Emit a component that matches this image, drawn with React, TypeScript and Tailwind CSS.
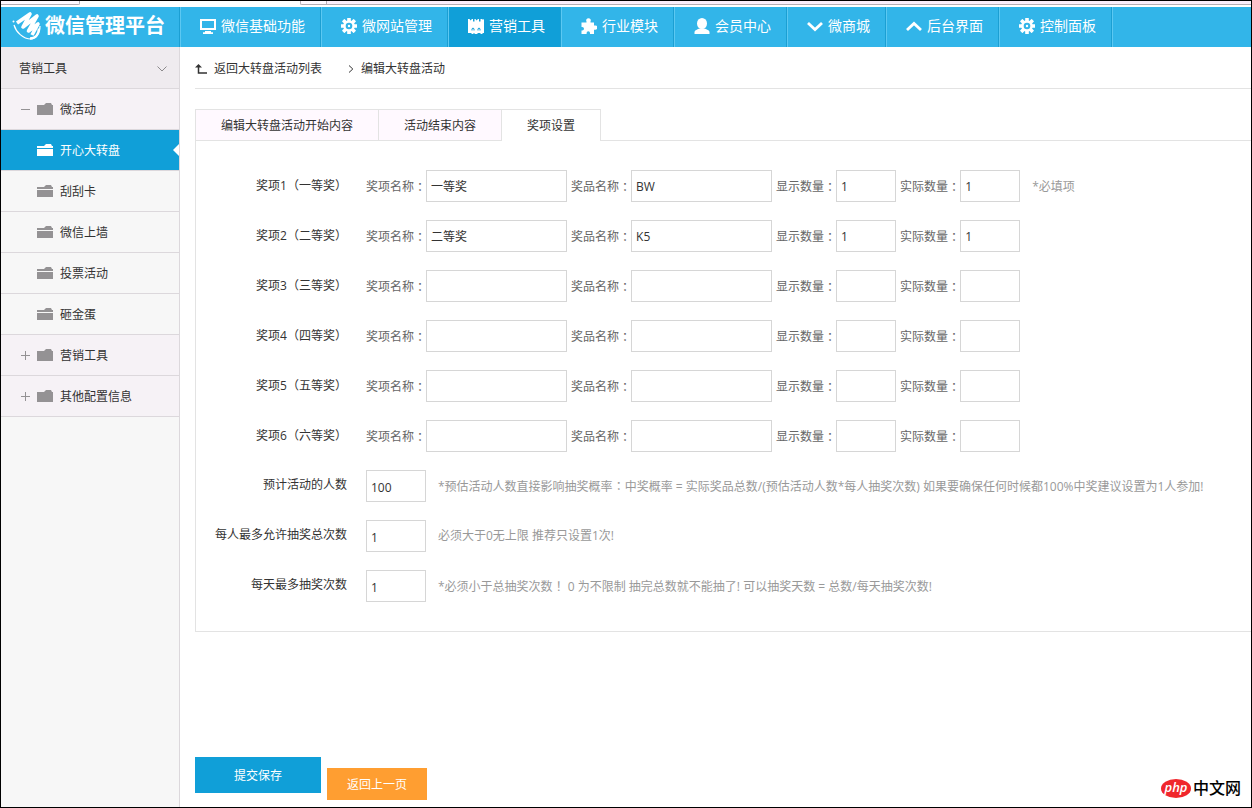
import { ReactNode } from 'react';

interface NavItem {
  label: string;
  icon: ReactNode;
  active?: boolean;
}

interface MenuItem {
  label: string;
  type: 'group' | 'item';
  open?: boolean;
  active?: boolean;
}

interface Prize {
  title: string;
  name: string;
  prize: string;
  shown: string;
  actual: string;
  hint?: string;
}

interface Setting {
  id: string;
  label: string;
  value: string;
  hint: string;
}

function Icon({ children }: { children: ReactNode }) {
  return (
    <svg viewBox="0 0 16 16" className="w-4 h-4 shrink-0" fill="currentColor" aria-hidden="true">
      {children}
    </svg>
  );
}

function GearIcon() {
  return (
    <Icon>
      {[0, 45, 90, 135].map((angle) => (
        <rect key={angle} x="6.200" y="-0.300" width="3.600" height="16.600" rx="0.6" transform={`rotate(${angle} 8 8)`} />
      ))}
      <circle cx="8" cy="8" r="5.800" />
      <circle cx="8" cy="8" r="3.300" fill="#32b5e9" />
      <circle cx="8" cy="8" r="1.200" />
    </Icon>
  );
}

const navItems: NavItem[] = [
  {
    label: '微信基础功能',
    icon: (
      <Icon>
        <path fillRule="evenodd" d="M0 1h16v11H0zM2 3v7h12V3z" />
        <path d="M5 13h6v1.200h2V16H3v-1.800h2z" />
      </Icon>
    ),
  },
  { label: '微网站管理', icon: <GearIcon /> },
  {
    label: '营销工具',
    active: true,
    icon: (
      <Icon>
        <path
          fillRule="evenodd"
          d="M0 1h1.500l1 1.500L4 1h1v2.500h1.500V1h1l1 1.500L10 1h1v2.500h1.500V1H14l1 .8L16 1v14h-1.500v1h-2v-1h-3v1h-3v-1h-1v1h-2v-1H0zM5 9.500L3.500 11v1.500h1v-1.500h1v1.500h1V11zM11 9.500L9.500 11v1.500h1v-1.500h1v1.500h1V11z"
        />
      </Icon>
    ),
  },
  {
    label: '行业模块',
    icon: (
      <Icon>
        <path d="M0.500 4.500h5V3.600A2.300 2.300 0 1 1 9.500 3.600v.9H13v3h.7a2.200 2.200 0 1 1 0 4.200H13V16H9v-1a1.700 1.700 0 0 0-3.400 0v1H0.500v-3.500h.7a1.800 1.800 0 0 0 0-3.600H0.500z" />
      </Icon>
    ),
  },
  {
    label: '会员中心',
    icon: (
      <Icon>
        <ellipse cx="8" cy="5.500" rx="5" ry="5.500" />
        <path d="M0.500 16v-2c0-1.500 3-3 5.500-3.500h4c2.500.5 5.500 2 5.500 3.500v2z" />
      </Icon>
    ),
  },
  {
    label: '微商城',
    icon: (
      <Icon>
        <path d="M1 5l7 6.500L15 5" fill="none" stroke="currentColor" strokeWidth="2.800" />
      </Icon>
    ),
  },
  {
    label: '后台界面',
    icon: (
      <Icon>
        <path d="M1 12l7-6.500L15 12" fill="none" stroke="currentColor" strokeWidth="2.800" />
      </Icon>
    ),
  },
  { label: '控制面板', icon: <GearIcon /> },
];

const menuItems: MenuItem[] = [
  { label: '微活动', type: 'group', open: true },
  { label: '开心大转盘', type: 'item', active: true },
  { label: '刮刮卡', type: 'item' },
  { label: '微信上墙', type: 'item' },
  { label: '投票活动', type: 'item' },
  { label: '砸金蛋', type: 'item' },
  { label: '营销工具', type: 'group' },
  { label: '其他配置信息', type: 'group' },
];

const tabs = ['编辑大转盘活动开始内容', '活动结束内容', '奖项设置'];

const prizes: Prize[] = [
  { title: '奖项1（一等奖）', name: '一等奖', prize: 'BW', shown: '1', actual: '1', hint: '*必填项' },
  { title: '奖项2（二等奖）', name: '二等奖', prize: 'K5', shown: '1', actual: '1' },
  { title: '奖项3（三等奖）', name: '', prize: '', shown: '', actual: '' },
  { title: '奖项4（四等奖）', name: '', prize: '', shown: '', actual: '' },
  { title: '奖项5（五等奖）', name: '', prize: '', shown: '', actual: '' },
  { title: '奖项6（六等奖）', name: '', prize: '', shown: '', actual: '' },
];

const settings: Setting[] = [
  {
    id: 'people',
    label: '预计活动的人数',
    value: '100',
    hint: '*预估活动人数直接影响抽奖概率：中奖概率 = 实际奖品总数/(预估活动人数*每人抽奖次数) 如果要确保任何时候都100%中奖建议设置为1人参加!',
  },
  { id: 'total', label: '每人最多允许抽奖总次数', value: '1', hint: '必须大于0无上限 推荐只设置1次!' },
  {
    id: 'daily',
    label: '每天最多抽奖次数',
    value: '1',
    hint: '*必须小于总抽奖次数！ 0 为不限制 抽完总数就不能抽了! 可以抽奖天数 = 总数/每天抽奖次数!',
  },
];

// Full-width punctuation sits in the middle of its cell
function Centered({ text }: { text: string }) {
  return (
    <>
      {text.split(/([：！（）])/).map((part, i) =>
        /^[：！（）]$/.test(part) ? (
          <span key={i} lang="zh-TW" className="font-['Noto_Sans_CJK_TC',sans-serif]">
            {part}
          </span>
        ) : (
          part
        )
      )}
    </>
  );
}

function TopNav() {
  return (
    <header className="flex h-10 bg-[#32b5e9] text-white">
      <div className="flex w-[179px] shrink-0 items-center gap-[3px] border-r border-[#1b9fd3] pb-0.5 pl-[11px]">
        <svg viewBox="0 0 30 30" className="h-[30px] w-[30px] shrink-0" fill="none" stroke="currentColor" aria-hidden="true">
          <circle cx="1.500" cy="10.500" r="1" fill="currentColor" stroke="none" />
          <path d="M5 12L18 3L11 16L25 5L16.500 20L26 13L20 24" strokeWidth="3.600" strokeLinejoin="round" />
          <path d="M2 14c2 7 9 14 17 14 5 0 9-5 9-13" strokeWidth="1.200" />
          <path d="M18 27.500c5 0 8.500-4 9-10" strokeWidth="2.400" />
        </svg>
        <span className="whitespace-nowrap text-xl font-bold leading-9">微信管理平台</span>
      </div>
      <nav className="flex">
        {navItems.map((item) => (
          <a
            key={item.label}
            href="#"
            className={`flex items-center gap-[5px] whitespace-nowrap border-l border-r border-l-[#5cc8f2] border-r-[#1b9fd3] pb-0.5 pl-[19px] pr-[15px] text-sm leading-9 ${
              item.active ? 'bg-[#109fd8]' : ''
            }`}
          >
            {item.icon}
            {item.label}
          </a>
        ))}
        <span className="border-l border-[#5cc8f2]" />
      </nav>
    </header>
  );
}

function FolderIcon({ split }: { split: boolean }) {
  return (
    <svg viewBox="0 0 16 12" className="h-3 w-4 shrink-0" fill="currentColor" aria-hidden="true">
      {split ? <path d="M0 2h7l2-2h5l1 2h1v2H0zM0 5h16v7H0z" /> : <path d="M0 2h7l2-2h5l1 2h1v10H0z" />}
    </svg>
  );
}

function Sidebar() {
  return (
    <aside className="w-[179px] shrink-0 border-r border-[#dcd8dc] bg-[#f7f7f7]">
      <div className="flex h-[42px] items-center justify-between border-b border-[#dcd8dc] bg-[#efebef] pl-[18px] pr-3 pt-0.5">
        <span>营销工具</span>
        <svg viewBox="0 0 10 6" className="h-1.5 w-2.5" fill="none" stroke="#8c8a8c" aria-hidden="true">
          <path d="M0.500 0.500L5 5l4.500-4.500" />
        </svg>
      </div>
      <ul>
        {menuItems.map((item) => (
          <li key={item.label} className="border-b border-[#dcd8dc]">
            <a
              href="#"
              className={`relative flex h-10 items-center pl-5 ${
                item.active ? 'bg-[#109fd8] text-white' : item.type === 'group' ? 'bg-[#f6f2f6]' : ''
              }`}
            >
              <span className="w-4 text-[#949294]">
                {item.type === 'group' && (
                  <svg viewBox="0 0 9 9" className="h-[9px] w-[9px]" stroke="currentColor" aria-hidden="true">
                    <path d={item.open ? 'M0 4.500h9' : 'M0 4.500h9M4.500 0v9'} />
                  </svg>
                )}
              </span>
              <span className={item.active ? 'text-white' : 'text-[#949294]'}>
                <FolderIcon split={item.type === 'item'} />
              </span>
              <span className="ml-[7px] pt-0.5">{item.label}</span>
              {item.active && (
                <svg viewBox="0 0 6 12" className="absolute right-0 top-3.5 h-3 w-1.5" fill="#fff" aria-hidden="true">
                  <path d="M6 0v12L0 6z" />
                </svg>
              )}
            </a>
          </li>
        ))}
      </ul>
    </aside>
  );
}

function Field({ label, value, wide }: { label: string; value: string; wide?: boolean }) {
  return (
    <label className="flex h-8 shrink-0 text-[#666] leading-[34px]">
      <Centered text={label} />
      <input
        type="text"
        defaultValue={value}
        className={`h-8 border border-[#d6d6d6] bg-white px-1 pt-0.5 text-[#333] outline-none ${wide ? 'w-[141px]' : 'w-[60px]'}`}
      />
    </label>
  );
}

function PrizeForm() {
  return (
    <div className="flex flex-col gap-[18px] border-b border-l border-[#e3e3e3] pb-[29px] pt-[29px] whitespace-nowrap">
      {prizes.map((row) => (
        <div key={row.title} role="group" aria-label={row.title} className="flex h-8 gap-1">
          <span className="mr-[15px] w-[151px] shrink-0 text-right leading-[30px]">
            <Centered text={row.title} />
          </span>
          <Field label="奖项名称：" value={row.name} wide />
          <Field label="奖品名称：" value={row.prize} wide />
          <Field label="显示数量：" value={row.shown} />
          <Field label="实际数量：" value={row.actual} />
          {row.hint && <span className="ml-2 leading-[34px] text-[#999]">{row.hint}</span>}
        </div>
      ))}
      {settings.map((row) => (
        <div key={row.id} className="flex h-8">
          <label htmlFor={row.id} className="mr-[19px] w-[151px] shrink-0 text-right leading-[30px]">
            {row.label}
          </label>
          <input
            id={row.id}
            type="text"
            defaultValue={row.value}
            className="h-8 w-[60px] shrink-0 border border-[#d6d6d6] bg-white px-1 pt-0.5 text-[#333] outline-none"
          />
          <span className="ml-3 leading-8 text-[#999]">
            <Centered text={row.hint} />
          </span>
        </div>
      ))}
    </div>
  );
}

export default function App() {
  return (
    <div
      lang="zh-CN"
      className="relative flex min-h-screen flex-col overflow-hidden border border-black bg-white font-['Open_Sans','Noto_Sans_CJK_SC',sans-serif] text-xs text-[#333]"
    >
      {/* Lower edge of the browser's tab strip */}
      <div className="flex h-1.5 items-start">
        <div className="h-1 w-[79px] rounded-br-xs border-b border-r border-[#b5aeb5] bg-[#fff9ff]" />
        <div className="h-1 w-[220px]" />
        <div className="h-1 w-[26px] rounded-bl-xs border-b border-l border-[#b5aeb5] bg-[#fff9ff]" />
        <div className="h-1 flex-1 border-b border-l border-[#b5aeb5] bg-[#fbeefb]" />
      </div>

      <TopNav />

      <div className="flex flex-1">
        <Sidebar />

        <main className="flex min-w-0 flex-1 flex-col pl-[15px]">
          {/* Breadcrumb */}
          <div className="flex h-[42px] items-center border-b border-[#e3e3e3] pt-0.5">
            <svg viewBox="0 0 12 10" className="h-2.5 w-3" fill="none" stroke="#333" aria-hidden="true">
              <path d="M0 3.500L3.500 0L7 3.500z" fill="#333" stroke="none" />
              <path d="M3.500 2v7H12" strokeWidth="1.500" />
            </svg>
            <a href="#" className="ml-[7px]">
              返回大转盘活动列表
            </a>
            <svg viewBox="0 0 6 8" className="ml-[26px] h-2 w-1.5" fill="none" stroke="#333" aria-hidden="true">
              <path d="M1 0.500L4.800 4L1 7.500" />
            </svg>
            <span className="ml-[7px]">编辑大转盘活动</span>
          </div>

          <div role="tablist" className="mt-5 flex h-8">
            {tabs.map((tab, i) => {
              const selected = i === tabs.length - 1;
              return (
                <button
                  key={tab}
                  type="button"
                  role="tab"
                  aria-selected={selected}
                  className={`border-l border-t border-[#e3e3e3] px-[25px] ${
                    selected ? 'border-r bg-white' : 'border-b bg-[#fff9ff] pt-px'
                  }`}
                >
                  {tab}
                </button>
              );
            })}
            <div className="flex-1 border-b border-[#e3e3e3]" />
          </div>
          <PrizeForm />

          <div className="mt-auto flex items-start gap-1.5 pb-[7px] pt-6 text-white">
            <button type="submit" className="h-9 w-[126px] bg-[#109fd8] pt-0.5">
              提交保存
            </button>
            <button type="button" className="mt-[11px] h-8 w-[100px] bg-[#ff9e31] pt-0.5">
              返回上一页
            </button>
          </div>
        </main>
      </div>

      {/* Site mark */}
      <div className="absolute bottom-[9px] right-2.5 flex items-center gap-0.5 text-black">
        <span className="flex h-[19px] w-[30px] items-center justify-center rounded-[50%] bg-[#f0262c] pb-0.5 text-[13px] font-semibold italic leading-4 text-white">
          php
        </span>
        <span className="text-base font-medium leading-5">中文网</span>
      </div>
    </div>
  );
}
